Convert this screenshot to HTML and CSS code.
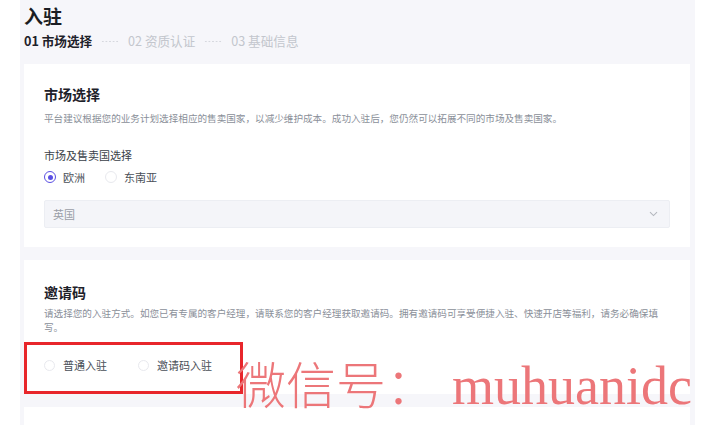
FILE: index.html
```html
<!DOCTYPE html>
<html lang="zh-CN">
<head>
<meta charset="utf-8">
<title>入驻</title>
<link rel="stylesheet" href="styles.css">
</head>
<body>
<div class="page">
  <main class="main">
    <h1 class="page-title">入驻</h1>
    <div class="steps">
      <span class="step active">01 市场选择</span>
      <span class="dots"></span>
      <span class="step">02 资质认证</span>
      <span class="dots"></span>
      <span class="step">03 基础信息</span>
    </div>

    <section class="card card-market">
      <h2 class="card-title">市场选择</h2>
      <p class="card-desc">平台建议根据您的业务计划选择相应的售卖国家，以减少维护成本。成功入驻后，您仍然可以拓展不同的市场及售卖国家。</p>
      <div class="field-label">市场及售卖国选择</div>
      <div class="radio-row">
        <label class="radio checked"><span class="circle"></span>欧洲</label>
        <label class="radio"><span class="circle"></span>东南亚</label>
      </div>
      <div class="select">
        <span class="select-value">英国</span>
        <svg class="chev" width="9" height="6" viewBox="0 0 9 6"><path d="M1 1.2 L4.5 4.6 L8 1.2" fill="none" stroke="#b4b7be" stroke-width="1.1"/></svg>
      </div>
    </section>

    <section class="card card-invite">
      <h2 class="card-title">邀请码</h2>
      <p class="card-desc">请选择您的入驻方式。如您已有专属的客户经理，请联系您的客户经理获取邀请码。拥有邀请码可享受便捷入驻、快速开店等福利，请务必确保填写。</p>
      <div class="radio-row invite-row">
        <label class="radio"><span class="circle"></span>普通入驻</label>
        <label class="radio"><span class="circle"></span>邀请码入驻</label>
      </div>
      <div class="highlight"></div>
    </section>

    <section class="card card-next"></section>

    <div class="watermark"><span class="wm-cjk">微信号：</span><span class="wm-latin">muhuanidc</span></div>
  </main>
</div>
</body>
</html>
```

FILE: styles.css
```css
* { box-sizing: border-box; }
html, body { margin: 0; padding: 0; }
body {
  background: #ffffff;
  font-family: "Noto Sans CJK SC", "Noto Sans", sans-serif;
  color: #1d2129;
  overflow: hidden;
  height: 425px;
}
.page {
  padding-left: 20px;
  width: 695px;
  height: 425px;
}
.main {
  position: relative;
  background: #f6f6fa;
  height: 425px;
  padding: 4px 5px 0 4px;
  overflow: hidden;
}
.page-title {
  margin: 0;
  font-size: 19px;
  line-height: 24px;
  font-weight: 700;
  color: #1a1d23;
}
.steps {
  display: flex;
  align-items: center;
  margin-top: 5px;
  height: 16px;
  font-size: 12.6px;
  line-height: 16px;
}
.step { color: #c3c6cd; white-space: nowrap; }
.step.active { color: #1d2129; font-weight: 700; }
.dots {
  width: 18px;
  height: 3px;
  margin: 0 9px;
  background-image: radial-gradient(circle, #d6d8de 0.8px, transparent 1.1px);
  background-size: 3.6px 3px;
}
.card {
  background: #ffffff;
  padding: 0 20px;
}
.card-market {
  margin-top: 15px;
  padding-top: 20px;
  padding-bottom: 19px;
}
.card-title {
  margin: 0;
  font-size: 14px;
  line-height: 20px;
  font-weight: 700;
  color: #1d2129;
}
.card-desc {
  margin: 7px 0 0;
  font-size: 9.6px;
  line-height: 14px;
  color: #8a8f99;
}
.field-label {
  margin-top: 22px;
  font-size: 11px;
  line-height: 16px;
  color: #3a3f48;
}
.radio-row {
  display: flex;
  gap: 20px;
  margin-top: 6px;
  height: 16px;
  align-items: center;
}
.radio {
  display: flex;
  align-items: center;
  font-size: 11px;
  line-height: 16px;
  color: #4a4f58;
}
.radio .circle {
  width: 12px;
  height: 12px;
  border-radius: 50%;
  border: 1px solid #e8e9ee;
  margin-right: 7px;
  background: #fff;
  display: inline-flex;
  align-items: center;
  justify-content: center;
}
.radio.checked .circle {
  border: 1.3px solid #5a4fe3;
}
.radio.checked .circle::after {
  content: "";
  width: 5px;
  height: 5px;
  border-radius: 50%;
  background: #5a4fe3;
}
.select {
  margin-top: 15px;
  height: 28px;
  background: #f4f5f9;
  border: 1px solid #eceef3;
  border-radius: 2px;
  display: flex;
  align-items: center;
  justify-content: space-between;
  padding: 0 11px 0 8px;
}
.select-value { font-size: 11px; color: #9a9ea7; }
.chev { display: block; }
.card-invite {
  position: relative;
  margin-top: 13px;
  padding-top: 22px;
  padding-bottom: 21px;
}
.card-invite .card-desc { margin-top: 4px; }
.invite-row {
  margin-top: 23px;
  gap: 31px;
}
.invite-row .radio .circle { width: 11px; height: 11px; margin-right: 8px; }
.highlight {
  position: absolute;
  left: 0;
  top: 82px;
  width: 219px;
  height: 52px;
  border: 3px solid #e8262b;
}
.card-next {
  margin-top: 13px;
  height: 60px;
}
.watermark {
  position: absolute;
  left: 216px;
  top: 352px;
  white-space: nowrap;
  color: #ec7679;
  line-height: 60px;
  display: flex;
  align-items: baseline;
}
.wm-cjk {
  font-family: "Noto Sans CJK SC", sans-serif;
  font-size: 50px;
  font-weight: 300;
}
.wm-latin {
  font-family: "Liberation Serif", serif;
  font-size: 54px;
  margin-left: 16px;
}
```
